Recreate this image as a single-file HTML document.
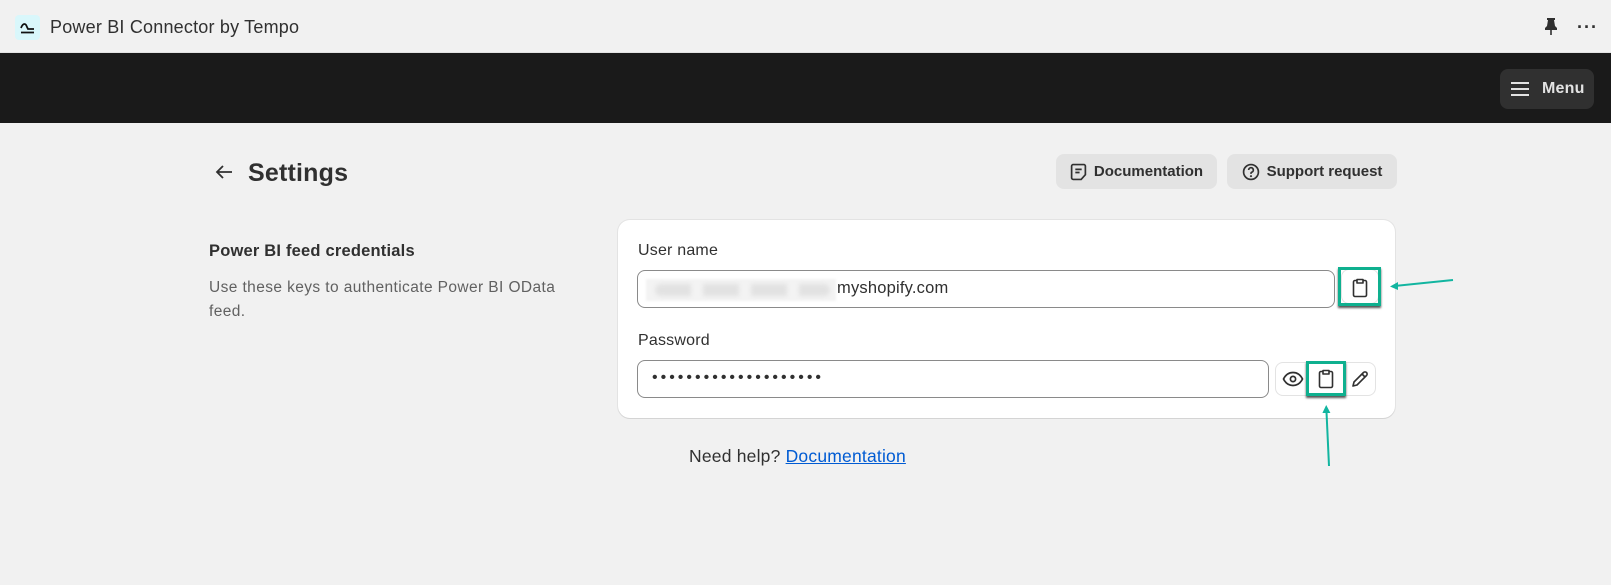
<!DOCTYPE html>
<html><head><meta charset="utf-8"><style>
*{box-sizing:border-box;margin:0;padding:0}
body{width:1611px;height:585px;background:#f1f1f1;font-family:"Liberation Sans",sans-serif;color:#303030;position:relative;overflow:hidden;letter-spacing:0.2px}
.abs{position:absolute}
.top{left:0;top:0;width:1611px;height:53px;background:#f1f1f1;border-bottom:1px solid #e3e3e3}
.dark{left:0;top:53px;width:1611px;height:70px;background:#1a1a1a}
.btn{background:#e3e3e3;border-radius:8px;font-weight:bold;font-size:15px;display:flex;align-items:center;justify-content:center;color:#303030;letter-spacing:0}
.card{left:618px;top:220px;width:777px;height:198px;background:#fff;border-radius:12px;box-shadow:0 1px 0 #d4d4d4,0 0 0 1px #e3e3e3}
.input{border:1px solid #8a8a8a;border-radius:8px;background:#fff}
.lbl{font-size:16px;color:#303030}
</style></head><body>
<div class="abs top"></div>
<div class="abs" style="left:15px;top:15px;width:25px;height:25px;background:#d9f7fb;border-radius:4px"></div>
<svg class="abs" style="left:15px;top:15px" width="25" height="25" viewBox="0 0 25 25"><path d="M6 13 Q7.5 9 9.5 9 Q11 9 12 12 L13 14 L19 14 M6 17.5 H19" stroke="#111" stroke-width="1.8" fill="none"/></svg>
<div class="abs" style="left:50px;top:17px;font-size:18px;color:#303030">Power BI Connector by Tempo</div>
<svg class="abs" style="left:1543px;top:17px" width="16" height="20" viewBox="0 0 16 20"><path d="M4 1h8v2h-1l1 6 2 2v2H2v-2l2-2 1-6H4z M7.2 13h1.6v5H7.2z" fill="#303030"/></svg>
<div class="abs" style="left:1577px;top:17px;font-size:18px;font-weight:bold;letter-spacing:1px;color:#303030">···</div>
<div class="abs dark"></div>
<div class="abs" style="left:1500px;top:69px;width:94px;height:40px;background:#303030;border-radius:8px"></div>
<svg class="abs" style="left:1510px;top:80px" width="20" height="18"><path d="M1 3h18M1 9h18M1 15h18" stroke="#e3e3e3" stroke-width="2"/></svg>
<div class="abs" style="left:1542px;top:80px;font-size:16px;font-weight:bold;color:#e3e3e3">Menu</div>

<svg class="abs" style="left:214px;top:164px" width="20" height="16"><path d="M18 8H3M9 2L3 8l6 6" stroke="#303030" stroke-width="1.8" fill="none"/></svg>
<div class="abs" style="left:248px;top:159px;font-size:25px;font-weight:bold;color:#303030">Settings</div>

<div class="abs btn" style="left:1056px;top:154px;width:161px;height:35px"><svg width="17" height="18" viewBox="0 0 16 17" style="margin-right:7px"><path d="M3 1.5h10a1.5 1.5 0 0 1 1.5 1.5v8l-4 4.5H3A1.5 1.5 0 0 1 1.5 14V3A1.5 1.5 0 0 1 3 1.5zM5 6h6M5 9h4" stroke="#303030" stroke-width="1.6" fill="none"/></svg>Documentation</div>
<div class="abs btn" style="left:1227px;top:154px;width:170px;height:35px"><svg width="18" height="18" viewBox="0 0 17 17" style="margin-right:7px"><circle cx="8.5" cy="8.5" r="7" stroke="#303030" stroke-width="1.6" fill="none"/><path d="M6.3 6.6a2.2 2.2 0 1 1 2.9 2.1c-.5.2-.7.6-.7 1v.6" stroke="#303030" stroke-width="1.6" fill="none"/><circle cx="8.5" cy="12.4" r="1" fill="#303030"/></svg>Support request</div>

<div class="abs" style="left:209px;top:242px;font-size:16.5px;font-weight:bold;color:#303030">Power BI feed credentials</div>
<div class="abs" style="left:209px;top:276px;width:365px;font-size:15.5px;line-height:24px;color:#616161;letter-spacing:0.4px">Use these keys to authenticate Power BI OData feed.</div>

<div class="abs card"></div>
<div class="abs lbl" style="left:638px;top:242px">User name</div>
<div class="abs input" style="left:637px;top:270px;width:698px;height:38px"></div>
<div class="abs" style="left:646px;top:279px;width:190px;height:22px;background:#f3f3f3;filter:blur(1px)"></div>
<div class="abs" style="left:655px;top:284px;width:175px;height:12px;background:repeating-linear-gradient(90deg,#e2e2e2 0 36px,transparent 36px 48px);border-radius:6px;filter:blur(2px)"></div>
<div class="abs" style="left:837px;top:279px;font-size:16.5px;color:#303030">myshopify.com</div>
<div class="abs" style="left:1341px;top:269px;width:38px;height:35px;border:1px solid #e3e3e3;border-radius:8px;background:#fff"></div>
<div class="abs" style="left:1338px;top:267px;width:43px;height:39px;border:3px solid #0fb08f;box-shadow:0 2px 2px #555"></div>
<svg class="abs" style="left:1350px;top:277px" width="20" height="22" viewBox="0 0 20 22"><path d="M7 3.5H5A1.5 1.5 0 0 0 3.5 5v13A1.5 1.5 0 0 0 5 19.5h10a1.5 1.5 0 0 0 1.5-1.5V5A1.5 1.5 0 0 0 15 3.5h-2M7 2.5h6v3.5H7z" stroke="#303030" stroke-width="1.6" fill="none" stroke-linejoin="round"/></svg>

<div class="abs lbl" style="left:638px;top:332px">Password</div>
<div class="abs input" style="left:637px;top:360px;width:632px;height:38px"></div>
<div class="abs" style="left:652px;top:369px;font-size:16px;letter-spacing:3px;color:#303030">••••••••••••••••••••</div>
<div class="abs" style="left:1275px;top:362px;width:101px;height:34px;border:1px solid #e3e3e3;border-radius:8px;background:#fff"></div>
<svg class="abs" style="left:1282px;top:370px" width="22" height="18" viewBox="0 0 22 18"><path d="M1.5 9C4 4 7.5 2.5 11 2.5S18 4 20.5 9C18 14 14.5 15.5 11 15.5S4 14 1.5 9z" stroke="#303030" stroke-width="1.7" fill="none"/><circle cx="11" cy="9" r="2.6" stroke="#303030" stroke-width="1.7" fill="none"/></svg>
<div class="abs" style="left:1306px;top:361px;width:40px;height:35px;border:3px solid #0fb08f;box-shadow:0 2px 2px #555"></div>
<svg class="abs" style="left:1316px;top:368px" width="20" height="22" viewBox="0 0 20 22"><path d="M7 3.5H5A1.5 1.5 0 0 0 3.5 5v13A1.5 1.5 0 0 0 5 19.5h10a1.5 1.5 0 0 0 1.5-1.5V5A1.5 1.5 0 0 0 15 3.5h-2M7 2.5h6v3.5H7z" stroke="#303030" stroke-width="1.6" fill="none" stroke-linejoin="round"/></svg>
<svg class="abs" style="left:1350px;top:369px" width="20" height="20" viewBox="0 0 20 20"><path d="M3 17l1-4L13.5 3.5a2 2 0 0 1 3 3L7 16z M12 5l3 3" stroke="#303030" stroke-width="1.6" fill="none" stroke-linejoin="round"/></svg>

<svg class="abs" style="left:1380px;top:270px" width="80" height="30"><path d="M73 10L14 16" stroke="#12b5a0" stroke-width="2"/><path d="M10 16.5l8-4.5v8z" fill="#12b5a0"/></svg>
<svg class="abs" style="left:1316px;top:400px" width="20" height="70"><path d="M13 66L10.5 12" stroke="#12b5a0" stroke-width="2"/><path d="M10.2 5l4.2 8h-8z" fill="#12b5a0"/></svg>

<div class="abs" style="left:689px;top:446px;font-size:17.5px;color:#303030">Need help? <span style="color:#005bd3;text-decoration:underline">Documentation</span></div>
</body></html>
